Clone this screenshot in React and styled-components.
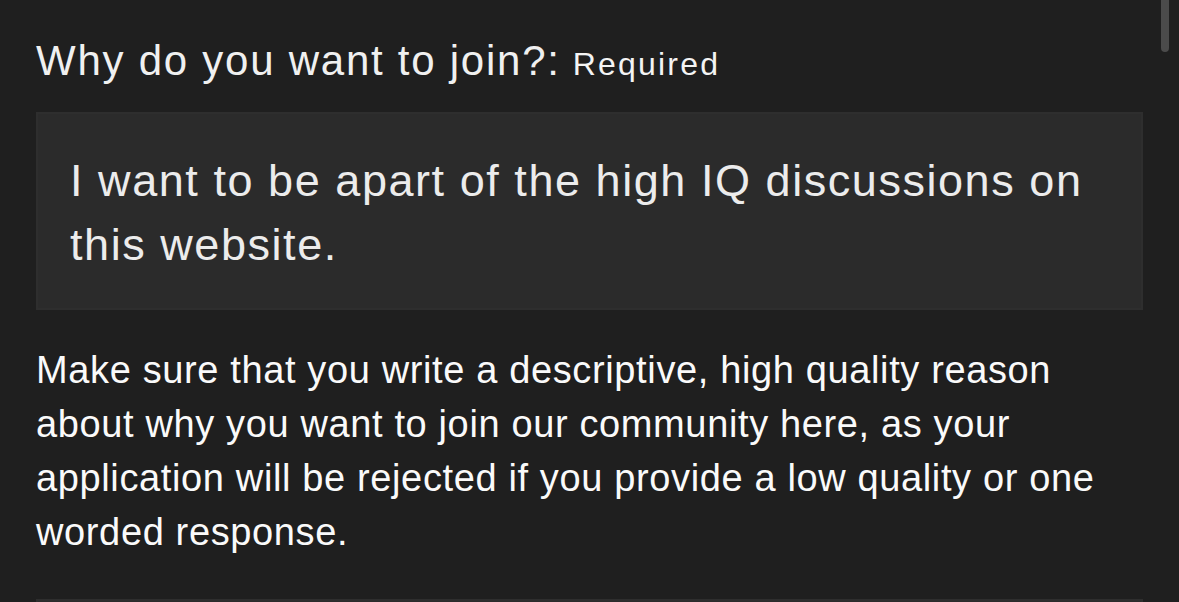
import React from "react";
import styled, { createGlobalStyle } from "styled-components";

const Global = createGlobalStyle`
  html, body { margin: 0; padding: 0; background: #1f1f1f; }
  body { font-family: "Liberation Sans", Arial, Helvetica, sans-serif; overflow: hidden; }
`;

const Page = styled.div`
  min-height: 602px;
  background: #1f1f1f;
  padding: 36px 36px 0 36px;
  box-sizing: border-box;
  width: 1179px;
`;

const Column = styled.div`
  width: 1107px;
  display: flex;
  flex-direction: column;
`;

const Label = styled.div`
  color: #f0f0f0;
  font-size: 42px;
  line-height: 50px;
  letter-spacing: 1.75px;
  display: flex;
  align-items: baseline;
  gap: 12px;
`;

const Hint = styled.span`
  font-size: 32px;
  letter-spacing: 2.2px;
  color: #f4f4f4;
`;

const AnswerBox = styled.div`
  margin-top: 23px;
  background: #2b2b2b;
  border: 2px solid #2e2e2e;
  padding: 35px 30px 31px 32px;
  color: #ececec;
  font-size: 45px;
  line-height: 64px;
  letter-spacing: 1.55px;
`;

const Note = styled.p`
  margin: 33px 0 0 0;
  color: #fafafa;
  font-size: 38px;
  line-height: 54px;
  letter-spacing: 0.63px;
`;

const NextBox = styled.div`
  margin-top: 40px;
  height: 10px;
  background: #2b2b2b;
  border: 2px solid #2e2e2e;
`;

const Scrollbar = styled.div`
  position: fixed;
  top: -10px;
  left: 1161px;
  width: 8px;
  height: 62px;
  border-radius: 4px;
  background: #4b4b4b;
`;

export default function App() {
  return (
    <>
      <Global />
      <Page>
        <Column>
          <Label>
            Why do you want to join?: <Hint>Required</Hint>
          </Label>
          <AnswerBox>
            I want to be apart of the high IQ discussions on this website.
          </AnswerBox>
          <Note>
            Make sure that you write a descriptive, high quality reason about why you want to join our community here, as your application will be rejected if you provide a low quality or one worded response.
          </Note>
          <NextBox />
        </Column>
      </Page>
      <Scrollbar />
    </>
  );
}
